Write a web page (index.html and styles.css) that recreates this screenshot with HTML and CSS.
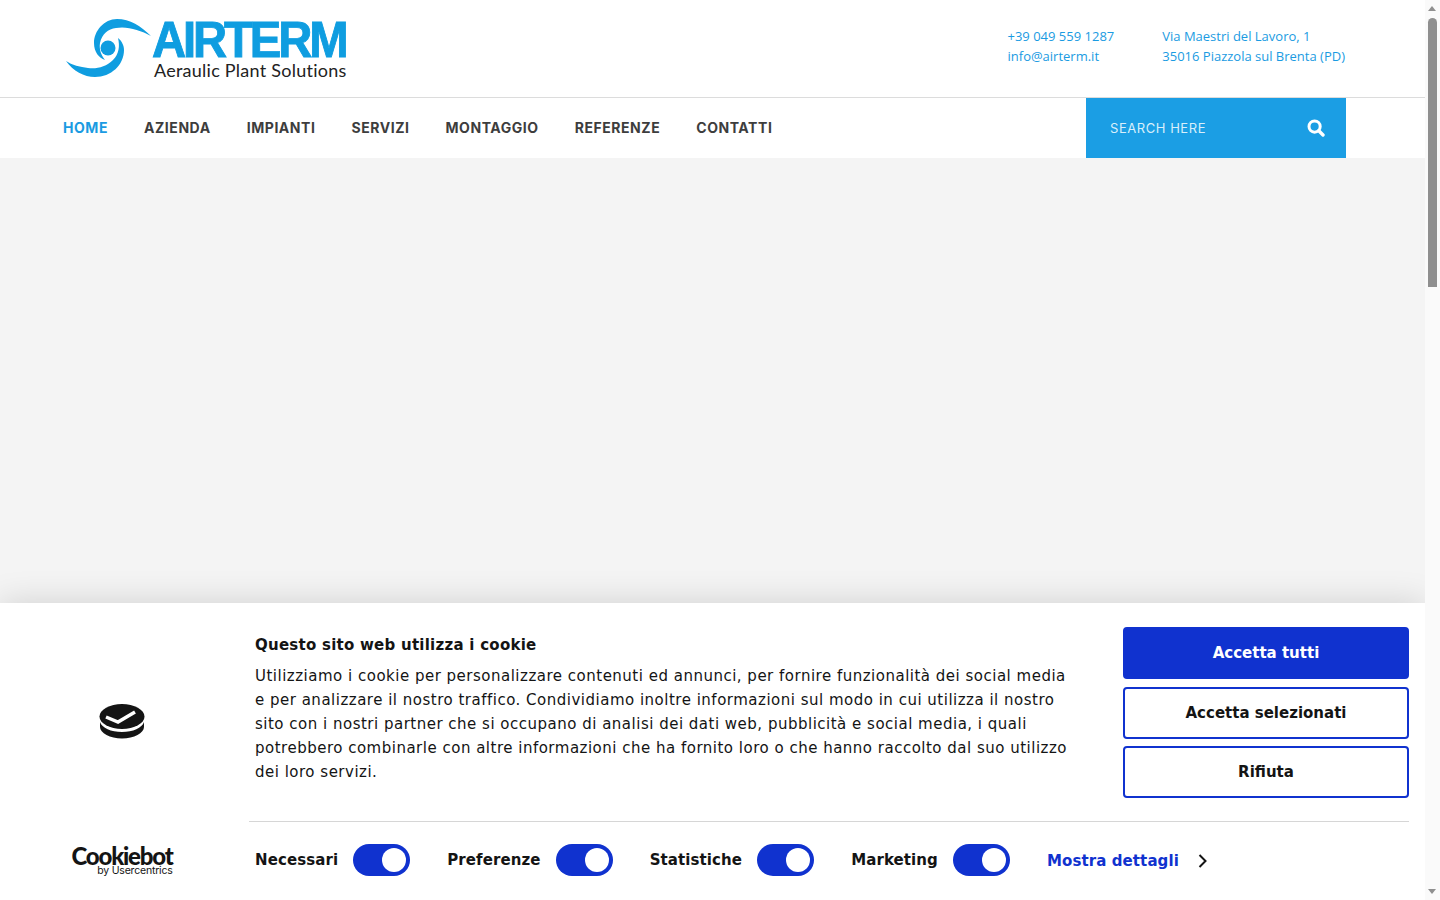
FILE: index.html
```html
<!DOCTYPE html>
<html lang="it">
<head>
    <meta charset="UTF-8">
    <meta name="viewport" content="width=device-width, initial-scale=1.0">
    <title>Airterm</title>
    <link rel="stylesheet" href="styles.css">
</head>
<body>
    <div class="page">
        <header class="top">
            <a class="logo" href="#">
                <svg class="logo-swirl" width="90" height="62" viewBox="64 18 90 62">
                    <path fill="#0f9de0" d="M151 36C141 26 130 19 117 19C104 19 94 31 94 43C94 52 99 58 105 60C101 55 99 49 100 43C102 34 108 29 116 28C127 26 140 30 151 36Z"/>
                    <circle fill="#0f9de0" cx="108" cy="48" r="7.5"/>
                    <path fill="#0f9de0" d="M66 61C73 71 84 77 95 77C111 77 124 65 124 50C124 46 122 41 118 38C120 46 119 54 113 60C106 67 97 69 88 68C80 67 72 65 66 61Z"/>
                </svg>
                <span class="logo-text">
                    <span class="logo-name">AIRTERM</span>
                    <span class="logo-sub">Aeraulic Plant Solutions</span>
                </span>
            </a>
            <div class="contacts">
                <div>+39 049 559 1287<br>info@airterm.it</div>
                <div>Via Maestri del Lavoro, 1<br>35016 Piazzola sul Brenta (PD)</div>
            </div>
        </header>
        <nav class="menu">
            <ul>
                <li class="active">HOME</li>
                <li>AZIENDA</li>
                <li>IMPIANTI</li>
                <li>SERVIZI</li>
                <li>MONTAGGIO</li>
                <li>REFERENZE</li>
                <li>CONTATTI</li>
            </ul>
            <div class="search">
                <span>SEARCH HERE</span>
                <svg width="18" height="18" viewBox="0 0 18 18">
                    <circle cx="7.6" cy="7.6" r="5.6" fill="none" stroke="#fff" stroke-width="3"/>
                    <path d="M11.8 11.8L16 16" stroke="#fff" stroke-width="3.4" stroke-linecap="round"/>
                </svg>
            </div>
        </nav>
        <div class="hero"></div>

        <section class="cookie">
            <div class="cookie-brand">
                <svg class="cookie-icon" width="46" height="35" viewBox="0 0 46 35">
                    <path fill="#141414" d="M1 18v5c0 6 10 11.500 22 11.500s22-5.500 22-11.500v-5c-2 6-11 10-22 10S3 24 1 18Z"/>
                    <ellipse fill="#141414" cx="23" cy="12.500" rx="22.500" ry="12.500"/>
                    <path d="M7 13l12 5 17-10" fill="none" stroke="#fff" stroke-width="3.500"/>
                </svg>
                <div class="cb-logo">
                    <span class="cb-name">Cookiebot</span>
                    <span class="cb-by">by Usercentrics</span>
                </div>
            </div>
            <div class="cookie-main">
                <div class="cookie-top">
                    <div class="cookie-text">
                        <h2>Questo sito web utilizza i cookie</h2>
                        <p>Utilizziamo i cookie per personalizzare contenuti ed annunci, per fornire funzionalità dei social media e per analizzare il nostro traffico. Condividiamo inoltre informazioni sul modo in cui utilizza il nostro sito con i nostri partner che si occupano di analisi dei dati web, pubblicità e social media, i quali potrebbero combinarle con altre informazioni che ha fornito loro o che hanno raccolto dal suo utilizzo dei loro servizi.</p>
                    </div>
                    <div class="cookie-buttons">
                        <button class="btn btn-primary">Accetta tutti</button>
                        <button class="btn">Accetta selezionati</button>
                        <button class="btn">Rifiuta</button>
                    </div>
                </div>
                <div class="cookie-bottom">
                    <div class="consent"><span>Necessari</span><i class="toggle"></i></div>
                    <div class="consent"><span>Preferenze</span><i class="toggle"></i></div>
                    <div class="consent"><span>Statistiche</span><i class="toggle"></i></div>
                    <div class="consent"><span>Marketing</span><i class="toggle"></i></div>
                    <a class="details" href="#">Mostra dettagli
                        <svg width="10" height="16" viewBox="0 0 10 16"><path d="M1.500 2l6 6-6 6" fill="none" stroke="#141414" stroke-width="2"/></svg>
                    </a>
                </div>
            </div>
        </section>
    </div>

    <div class="scrollbar">
        <span class="arrow-up"></span>
        <span class="thumb"></span>
        <span class="arrow-down"></span>
    </div>
</body>
</html>
```

FILE: styles.css
```css
* {
    box-sizing: border-box;
}
html, body {
    margin: 0;
    height: 900px;
    overflow: hidden;
}
body {
    background: #fafafa;
    font-family: "Open Sans", Arial, sans-serif;
}
.page {
    width: 1425px;
    height: 900px;
    background: #fff;
    display: flex;
    flex-direction: column;
}

/* header */
.top {
    height: 98px;
    flex: none;
    display: flex;
    justify-content: space-between;
    align-items: flex-start;
    padding: 0 80px 0 64px;
    border-bottom: 1px solid #dcdcdc;
}
.logo {
    display: flex;
    color: #222;
    text-decoration: none;
    margin-top: 18px;
}
.logo-swirl {
    flex: none;
}
.logo-text {
    display: flex;
    flex-direction: column;
    width: 194px;
    padding-top: 2px;
}
.logo-name {
    font-family: "Liberation Sans", Arial, sans-serif;
    font-weight: 700;
    font-size: 50px;
    line-height: 40px;
    letter-spacing: -3.3px;
    margin-left: -2px;
    color: #0f9de0;
    -webkit-text-stroke: 0.9px #0f9de0;
    transform: scaleX(0.945);
    transform-origin: left center;
}
.logo-sub {
    font-family: Lato, sans-serif;
    font-size: 18px;
    line-height: 20px;
    letter-spacing: 0.25px;
    white-space: nowrap;
}
.contacts {
    display: flex;
    gap: 48px;
    margin-top: 26px;
    font-size: 13px;
    line-height: 20px;
    color: #1a9be2;
}

/* menu */
.menu {
    height: 60px;
    flex: none;
    display: flex;
    justify-content: space-between;
    padding: 0 79px 0 63px;
}
.menu ul {
    display: flex;
    gap: 36px;
    margin: 0 0 1px;
    padding: 0;
    list-style: none;
    align-items: center;
    font-family: Inter, Arial, sans-serif;
    font-size: 14px;
    font-weight: 700;
    letter-spacing: 0.55px;
    color: #3d3d3d;
}
.menu .active {
    color: #1a9be2;
}
.search {
    width: 260px;
    background: #1b9ee4;
    color: #d8effb;
    display: flex;
    align-items: center;
    justify-content: space-between;
    padding: 0 21px 0 24px;
    font-family: Inter, Arial, sans-serif;
    font-size: 13px;
    letter-spacing: 0.55px;
}
.hero {
    flex: 1;
    background: #f4f4f4;
}

/* cookie banner */
.cookie {
    height: 297px;
    flex: none;
    display: flex;
    background: #fff;
    box-shadow: 0 0 32px rgba(0, 0, 0, 0.15);
    color: #141414;
    font-family: "DejaVu Sans", Verdana, sans-serif;
    font-size: 15px;
}
.cookie-brand {
    width: 249px;
    flex: none;
    display: flex;
    flex-direction: column;
    align-items: center;
    padding: 101px 5px 0 0;
}
.cb-logo {
    display: flex;
    flex-direction: column;
    align-items: flex-end;
    margin-top: 107px;
    font-family: Lato, Arial, sans-serif;
}
.cb-name {
    font-size: 24px;
    font-weight: 900;
    line-height: 20px;
    letter-spacing: -1.2px;
}
.cb-by {
    font-family: Inter, Arial, sans-serif;
    font-size: 10.5px;
    line-height: 13px;
    letter-spacing: -0.2px;
    margin-top: -2px;
}
.cookie-main {
    width: 1160px;
    display: flex;
    flex-direction: column;
}
.cookie-top {
    display: flex;
    justify-content: space-between;
    padding: 24px 0 23px 6px;
    border-bottom: 1px solid #d6d6d6;
}
.cookie-text {
    width: 820px;
}
.cookie-text h2 {
    margin: 9px 0 9px;
    font-size: 15px;
    line-height: 19px;
    font-weight: 700;
    letter-spacing: 0.25px;
}
.cookie-text p {
    margin: 0;
    line-height: 24px;
    letter-spacing: 0.5px;
}
.cookie-buttons {
    width: 286px;
    display: flex;
    flex-direction: column;
    gap: 7.5px;
}
.btn {
    height: 52px;
    border: 2px solid #1032cf;
    border-radius: 4px;
    background: #fff;
    color: #141414;
    font: 700 15px "DejaVu Sans", Verdana, sans-serif;
}
.btn-primary {
    background: #1032cf;
    color: #fff;
}
.cookie-bottom {
    display: flex;
    align-items: center;
    padding: 22px 0 0 6px;
    font-weight: 700;
    letter-spacing: 0.1px;
}
.consent {
    display: flex;
    align-items: center;
    gap: 15px;
    margin-right: 37px;
}
.toggle {
    display: block;
    width: 57px;
    height: 32px;
    border-radius: 16px;
    background: #1032cf;
    padding: 4px 4px 4px 29px;
}
.toggle::before {
    content: "";
    display: block;
    width: 24px;
    height: 24px;
    border-radius: 50%;
    background: #fff;
}
.details {
    display: flex;
    align-items: center;
    gap: 19px;
    margin-top: 1px;
    color: #1032cf;
    text-decoration: none;
}

/* scrollbar drawn over the window edge */
.scrollbar {
    position: absolute;
    top: 0;
    right: 0;
    width: 15px;
    height: 900px;
    background: #fafafa;
}
.thumb {
    position: absolute;
    top: 18px;
    left: 3px;
    width: 9px;
    height: 269px;
    border-radius: 5px 5px 0 0;
    background: #8f8f8f;
}
.arrow-up, .arrow-down {
    position: absolute;
    left: 3px;
    border-left: 4.5px solid transparent;
    border-right: 4.5px solid transparent;
}
.arrow-up {
    top: 6px;
    border-bottom: 5px solid #8f8f8f;
}
.arrow-down {
    bottom: 6px;
    border-top: 5px solid #8f8f8f;
}
```
